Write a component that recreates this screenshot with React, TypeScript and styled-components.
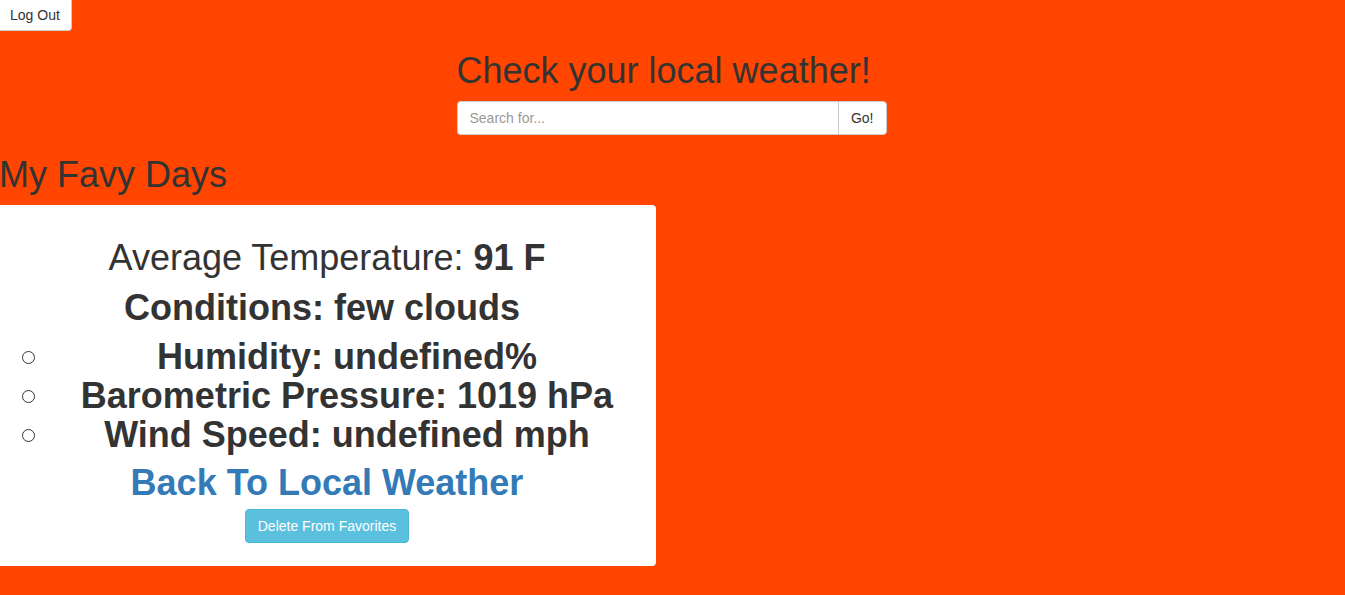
import React from "react";
import styled, { createGlobalStyle } from "styled-components";

const Global = createGlobalStyle`
  html, body { margin: 0; padding: 0; }
  body {
    background: #ff4500;
    font-family: "Liberation Sans", Arial, sans-serif;
    font-size: 14px;
    line-height: 1.42857;
    color: #333;
  }
  * { box-sizing: border-box; }
`;

const Page = styled.div`
  display: flex;
  flex-direction: column;
  min-height: 595px;
`;

const TopBar = styled.div`
  display: flex;
`;

const Button = styled.button<{ $variant?: "default" | "info" }>`
  font-family: "Liberation Sans", Arial, sans-serif;
  font-size: 14px;
  line-height: 20px;
  padding: 6px 12px;
  border: 1px solid ${(p) => (p.$variant === "info" ? "#46b8da" : "#ccc")};
  background: ${(p) => (p.$variant === "info" ? "#5bc0de" : "#fff")};
  color: ${(p) => (p.$variant === "info" ? "#fff" : "#333")};
  border-radius: 4px;
  cursor: pointer;
`;

const LogOut = styled(Button)`
  padding: 5px 11px 5px 10px;
  border-radius: 0 0 4px 0;
  border-top: 0;
  border-left: 0;
`;

const Header = styled.div`
  width: 430px;
  margin: 0 auto;
  display: flex;
  flex-direction: column;
  position: relative;
  left: -1px;
`;

const Title = styled.h1`
  font-size: 36px;
  font-weight: 500;
  line-height: 1.1;
  margin: 20px 0 10px;
  color: inherit;
`;

const InputGroup = styled.div`
  display: flex;
  height: 34px;
`;

const SearchInput = styled.input`
  flex: 1;
  height: 34px;
  padding: 6px 12px;
  font-family: "Liberation Sans", Arial, sans-serif;
  font-size: 14px;
  color: #555;
  border: 1px solid #ccc;
  border-right: 0;
  border-radius: 4px 0 0 4px;
  outline: none;
  &::placeholder { color: #999; }
`;

const GoButton = styled(Button)`
  border-radius: 0 4px 4px 0;
  height: 34px;
`;

const Section = styled.div`
  display: flex;
  flex-direction: column;
`;

const SectionTitle = styled(Title)`
  margin: 20px 0 11px -1px;
`;

const Panel = styled.div`
  width: 656px;
  background: #fff;
  border-radius: 0 4px 4px 0;
  padding: 33px 2px 23px 0;
  display: flex;
  flex-direction: column;
  align-items: stretch;
  text-align: center;
`;

const Line = styled.h1<{ $bold?: boolean; $shift?: number }>`
  font-size: 36px;
  font-weight: ${(p) => (p.$bold ? 700 : 400)};
  line-height: 1.1;
  margin: 0 0 10px;
  padding-right: ${(p) => p.$shift ?? 0}px;
`;

const List = styled.ul`
  list-style: none;
  margin: 0 0 9px;
  padding-left: 40px;
`;

const Item = styled.li`
  position: relative;
  font-size: 36px;
  font-weight: 700;
  line-height: 39px;

  &::before {
    content: "";
    position: absolute;
    left: -18px;
    top: 14px;
    width: 11px;
    height: 11px;
    border: 1px solid #333;
    border-radius: 50%;
  }
`;

const BackLink = styled.a`
  font-size: 36px;
  font-weight: 700;
  line-height: 1.1;
  color: #337ab7;
  text-decoration: none;
  margin-bottom: 6px;
`;

const Actions = styled.div`
  display: flex;
  justify-content: center;
`;

export default function App() {
  return (
    <Page>
      <Global />
      <TopBar>
        <LogOut>Log Out</LogOut>
      </TopBar>
      <Header>
        <Title>Check your local weather!</Title>
        <InputGroup>
          <SearchInput placeholder="Search for..." />
          <GoButton>Go!</GoButton>
        </InputGroup>
      </Header>
      <Section>
        <SectionTitle>My Favy Days</SectionTitle>
        <Panel>
          <Line>
            Average Temperature: <b>91 F</b>
          </Line>
          <Line $bold $shift={10}>
            Conditions: few clouds
          </Line>
          <List>
            <Item>Humidity: undefined%</Item>
            <Item>Barometric Pressure: 1019 hPa</Item>
            <Item>Wind Speed: undefined mph</Item>
          </List>
          <BackLink href="#">Back To Local Weather</BackLink>
          <Actions>
            <Button $variant="info">Delete From Favorites</Button>
          </Actions>
        </Panel>
      </Section>
    </Page>
  );
}
